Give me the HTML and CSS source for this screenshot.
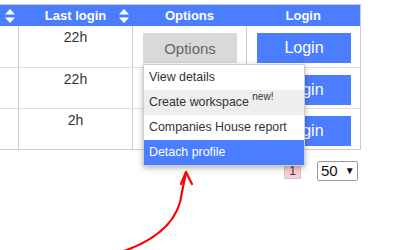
FILE: index.html
```html
<!DOCTYPE html>
<html lang="en">
  <head>
    <meta charset="UTF-8" />
    <meta name="viewport" content="width=device-width, initial-scale=1.0" />
    <title>Profiles</title>
    <link rel="stylesheet" href="styles.css">
  </head>
  <body>
    <div class="page">
      <table class="grid">
        <colgroup>
          <col class="col-first">
          <col class="col-std">
          <col class="col-std">
          <col class="col-std">
        </colgroup>
        <thead>
          <tr>
            <th>
              <div class="th-sort">
                <span></span>
                <span class="th-label"></span>
                <svg class="sort-icon" viewBox="0 0 10 14" width="10" height="14">
                  <polygon points="5,0 10,5.5 0,5.5" fill="#fff" />
                  <polygon points="0,8.5 10,8.5 5,14" fill="#fff" />
                </svg>
              </div>
            </th>
            <th>
              <div class="th-sort">
                <span></span>
                <span class="th-label">Last login</span>
                <svg class="sort-icon" viewBox="0 0 10 14" width="10" height="14">
                  <polygon points="5,0 10,5.5 0,5.5" fill="#fff" />
                  <polygon points="0,8.5 10,8.5 5,14" fill="#fff" />
                </svg>
              </div>
            </th>
            <th>Options</th>
            <th>Login</th>
          </tr>
        </thead>
        <tbody>
          <tr>
            <td></td>
            <td class="cell-text">22h</td>
            <td class="cell-btn">
              <div class="dropdown">
                <button type="button" class="btn-options">Options</button>
                <div class="menu">
                  <div class="menu-item">View details</div>
                  <div class="menu-item hover">Create workspace <sup class="new">new!</sup></div>
                  <div class="menu-item">Companies House report</div>
                  <div class="menu-item active">Detach profile</div>
                </div>
              </div>
            </td>
            <td class="cell-btn"><button type="button" class="btn-login">Login</button></td>
          </tr>
          <tr>
            <td></td>
            <td class="cell-text">22h</td>
            <td class="cell-btn"></td>
            <td class="cell-btn"><button type="button" class="btn-login">Login</button></td>
          </tr>
          <tr>
            <td></td>
            <td class="cell-text">2h</td>
            <td class="cell-btn"></td>
            <td class="cell-btn"><button type="button" class="btn-login">Login</button></td>
          </tr>
        </tbody>
      </table>

      <div class="pager">
        <span class="page-num">1</span>
        <span class="page-size">50 <span class="caret">▼</span></span>
      </div>
    </div>

    <svg class="annotation" width="398" height="250" viewBox="0 0 398 250">
      <path d="M124 251 Q178 232 182 192 Q184 182 186 173" fill="none" stroke="#f00" stroke-width="2.2" stroke-linecap="round" />
      <path d="M181 184 L186 172 L192 184" fill="none" stroke="#f00" stroke-width="2.2" stroke-linecap="round" stroke-linejoin="round" />
    </svg>
  </body>
</html>
```

FILE: styles.css
```css
body {
  margin: 0;
  padding: 0;
  font-family: "Liberation Sans", Arial, sans-serif;
  background-color: #fff;
  color: #333;
  overflow: hidden;
  width: 398px;
  height: 250px;
  position: relative;
}

.page {
  padding-top: 4px;
  margin-left: -43px;
  width: 403px;
}

.grid {
  border-collapse: collapse;
  table-layout: fixed;
  width: 403px;
  border: 1px solid #ccc;
}

.col-first {
  width: 61px;
}

.col-std {
  width: 114px;
}

.grid th {
  background-color: #4a7dff;
  color: #fff;
  font-size: 13px;
  font-weight: bold;
  height: 21px;
  padding: 0;
  line-height: 21px;
  text-align: center;
  border: none;
}

.th-sort {
  display: grid;
  grid-template-columns: 14px 1fr 14px;
  align-items: center;
}

.sort-icon {
  display: block;
  margin-top: 1px;
}

.grid tbody tr {
  height: 41px;
}

.grid td {
  padding: 0;
  vertical-align: top;
  border-left: 1px solid #ccc;
  border-right: 1px solid #ccc;
  border-bottom: 1px solid #ddd;
  font-size: 14px;
}

.grid tbody tr:last-child td {
  border-bottom: 1px solid #ccc;
}

.grid .cell-text {
  text-align: center;
  padding-top: 3px;
  line-height: 16px;
}

.grid .cell-btn {
  padding: 7px 9px 0 10px;
}

.btn-options,
.btn-login {
  display: block;
  width: 94px;
  height: 30px;
  border: none;
  padding: 0;
  font-family: "Liberation Sans", Arial, sans-serif;
  cursor: pointer;
}

.btn-options {
  background-color: #d9d9d9;
  color: #666;
  font-size: 15px;
}

.btn-login {
  background-color: #4a7dff;
  color: #fff;
  font-size: 16px;
}

.dropdown {
  position: relative;
}

.menu {
  position: absolute;
  top: 31px;
  left: 0;
  width: 160px;
  background-color: #fff;
  border: 1px solid #ccc;
  box-shadow: 0 2px 6px rgba(0, 0, 0, 0.3);
  z-index: 10;
}

.menu-item {
  height: 25px;
  line-height: 25px;
  padding-left: 5px;
  font-size: 12.4px;
  color: #333;
  white-space: nowrap;
}

.menu-item.hover {
  background-color: #eee;
}

.menu-item.active {
  background-color: #4a7dff;
  color: #fff;
}

.new {
  font-size: 10px;
  vertical-align: 6px;
  line-height: 0;
}

.pager {
  display: flex;
  justify-content: flex-end;
  align-items: flex-start;
  margin-top: 11px;
  padding-right: 2px;
  gap: 16px;
}

.page-num {
  width: 15px;
  height: 14px;
  margin-top: 2px;
  background-color: #fcc;
  border: 1px solid #ccc;
  color: #246;
  font-size: 12px;
  line-height: 14px;
  text-align: center;
}

.page-size {
  width: 36px;
  height: 18px;
  border: 1px solid #999;
  border-radius: 2px;
  font-size: 15px;
  line-height: 18px;
  padding-left: 3px;
  color: #111;
}

.caret {
  font-size: 10px;
  margin-left: 3px;
  vertical-align: 2px;
}

.annotation {
  position: absolute;
  top: 0;
  left: 0;
  pointer-events: none;
}
```
